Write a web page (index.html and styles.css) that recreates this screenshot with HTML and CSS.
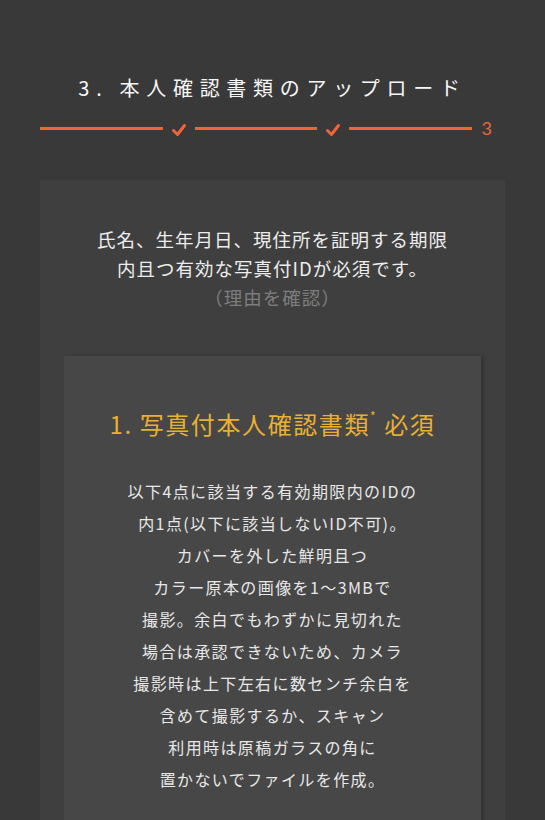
FILE: index.html
```html
<!DOCTYPE html>
<html lang="ja">
<head>
<meta charset="utf-8">
<title>本人確認書類のアップロード</title>
<link rel="stylesheet" href="styles.css">
</head>
<body>
<div class="page">
  <h1 class="title">3. 本人確認書類のアップロード</h1>
  <div class="progress">
    <span class="bar"></span>
    <svg class="check" viewBox="0 0 16 16" width="16" height="16"><path d="M2.5 8.5 L6.5 12.5 L13.5 3.5" fill="none" stroke="#f0643a" stroke-width="3" stroke-linecap="round" stroke-linejoin="round"/></svg>
    <span class="bar"></span>
    <svg class="check" viewBox="0 0 16 16" width="16" height="16"><path d="M2.5 8.5 L6.5 12.5 L13.5 3.5" fill="none" stroke="#f0643a" stroke-width="3" stroke-linecap="round" stroke-linejoin="round"/></svg>
    <span class="bar"></span>
    <span class="step">3</span>
  </div>
  <section class="card">
    <p class="lead">氏名、生年月日、現住所を証明する期限<br>内且つ有効な写真付IDが必須です。</p>
    <p class="reason">（理由を確認）</p>
    <div class="inner">
      <h2 class="inner-title">1. 写真付本人確認書類<sup>*</sup> 必須</h2>
      <p class="desc">以下4点に該当する有効期限内のIDの<br>内1点(以下に該当しないID不可)。<br>カバーを外した鮮明且つ<br>カラー原本の画像を1〜3MBで<br>撮影。余白でもわずかに見切れた<br>場合は承認できないため、カメラ<br>撮影時は上下左右に数センチ余白を<br>含めて撮影するか、スキャン<br>利用時は原稿ガラスの角に<br>置かないでファイルを作成。</p>
    </div>
  </section>
</div>
</body>
</html>
```

FILE: styles.css
```css
html, body {
  margin: 0;
  padding: 0;
  background: #393939;
}
body {
  font-family: "Noto Sans CJK JP", "Noto Sans", sans-serif;
  color: #ececec;
}
.page {
  padding: 73px 40px 0 40px;
}
.title {
  margin: 0;
  font-size: 20px;
  line-height: 30px;
  font-weight: 400;
  letter-spacing: 6.7px;
  text-align: center;
  color: #f6f6f6;
}
.progress {
  display: flex;
  align-items: center;
  height: 20px;
  margin-top: 15px;
  padding-right: 13px;
}
.bar {
  flex: 1;
  height: 3px;
  background: #f0643a;
}
.check {
  margin: 4px 8px 0 8px;
  flex: none;
}
.step {
  margin-left: 10px;
  color: #f0643a;
  font-family: "Lato", "Noto Sans", sans-serif;
  font-size: 18px;
  line-height: 20px;
}
.card {
  margin-top: 42px;
  background: #3f3f3f;
  padding: 45px 24px 40px 24px;
  text-align: center;
}
.lead {
  margin: 0;
  font-size: 18.5px;
  line-height: 29px;
  letter-spacing: 1px;
  color: #ededed;
}
.reason {
  margin: 0;
  font-size: 18.5px;
  line-height: 29px;
  letter-spacing: 1px;
  color: #7d7d7d;
}
.inner {
  margin-top: 44px;
  background: #474747;
  padding: 50px 10px 40px 10px;
  box-shadow: 3px 0 3px rgba(0, 0, 0, 0.18);
}
.inner-title {
  margin: 0;
  font-size: 24px;
  line-height: 36px;
  font-weight: 400;
  letter-spacing: 1.6px;
  color: #e9b032;
}
.inner-title sup {
  font-size: 12px;
  vertical-align: top;
  line-height: 20px;
}
.desc {
  margin: 33px 0 0 0;
  font-size: 16px;
  line-height: 32px;
  letter-spacing: 1.4px;
  color: #e8e8e8;
}
```
